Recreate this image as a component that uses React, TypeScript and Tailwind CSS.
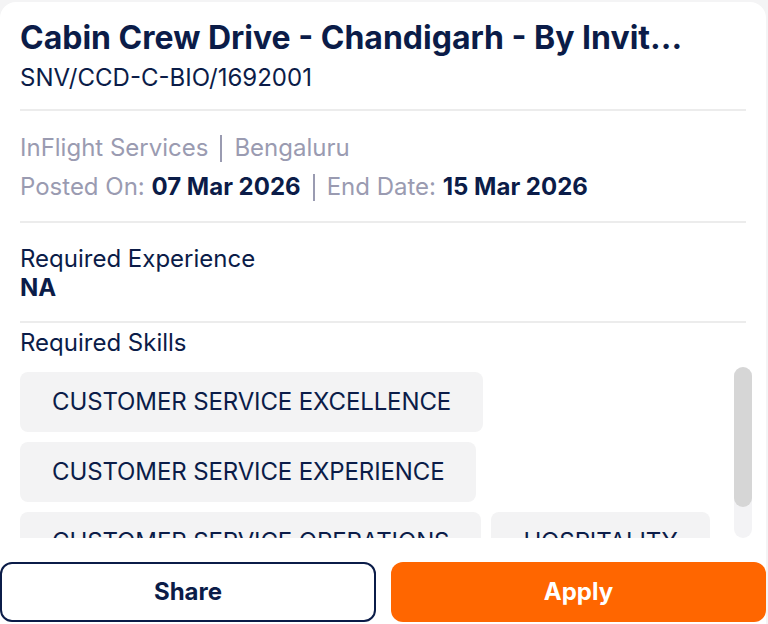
const skills = [
  "CUSTOMER SERVICE EXCELLENCE",
  "CUSTOMER SERVICE EXPERIENCE",
  "CUSTOMER SERVICE OPERATIONS",
  "HOSPITALITY",
  "TEAMWORK",
  "COMMUNICATION",
];

export default function App() {
  return (
    <div className="h-[624px] w-[768px] overflow-hidden bg-[#f4f4f5] pt-[2px] font-['Inter',sans-serif] text-[#0b1c48]">
      <div className="flex h-[630px] w-[766px] flex-col rounded-t-[16px] bg-white">
        {/* Header */}
        <div className="px-[20px] pt-[16px]">
          <h1 className="whitespace-nowrap text-[32px] leading-[40px] font-bold">
            Cabin Crew Drive - Chandigarh - By Invit...
          </h1>
          <p className="mt-[5px] text-[24px] leading-[30px]">SNV/CCD-C-BIO/1692001</p>
        </div>
        <div className="mx-[20px] mt-[16px] h-[2px] bg-[#ececec]" />

        {/* Meta */}
        <div className="px-[20px] pt-[22px] text-[24px] leading-[30px] text-[#9a9bb1]">
          <div className="flex items-center">
            <span>InFlight Services</span>
            <span className="mx-[12px] h-[27px] w-[2px] bg-[#9a9bb1]" />
            <span>Bengaluru</span>
          </div>
          <div className="mt-[9px] flex items-center">
            <span>
              Posted On: <span className="font-bold text-[#0b1c48]">07 Mar 2026</span>
            </span>
            <span className="mx-[12px] h-[27px] w-[2px] bg-[#9a9bb1]" />
            <span>
              End Date: <span className="font-bold text-[#0b1c48]">15 Mar 2026</span>
            </span>
          </div>
        </div>
        <div className="mx-[20px] mt-[19px] h-[2px] bg-[#ececec]" />

        {/* Experience */}
        <div className="px-[20px] pt-[21px] text-[24px] leading-[30px]">
          <p>Required Experience</p>
          <p className="-mt-[1px] font-bold">NA</p>
        </div>
        <div className="mx-[20px] mt-[18px] h-[2px] bg-[#ececec]" />

        {/* Skills */}
        <div className="px-[20px] pt-[5px] text-[24px] leading-[30px]">
          <p>Required Skills</p>
        </div>
        <div className="mt-[9px] flex h-[171px] pl-[20px]">
          <div className="flex flex-1 flex-wrap content-start gap-[10px] overflow-hidden pt-[5px]">
            {skills.map((s) => (
              <span
                key={s}
                className="flex h-[60px] items-center rounded-[8px] bg-[#f3f3f4] px-[32px] text-[24px] tracking-[-0.12px]"
              >
                {s}
              </span>
            ))}
          </div>
          <div className="ml-[18px] mr-[14px] flex w-[18px] flex-col rounded-full bg-[#f3f3f5]">
            <div className="h-[140px] rounded-full bg-[#d6d6d6]" />
          </div>
        </div>

        {/* Actions */}
        <div className="mt-[24px] flex gap-[15px]">
          <button className="h-[60px] w-[376px] rounded-[12px] border-2 border-[#0b1c48] bg-white text-[24px] font-bold text-[#0b1c48]">
            Share
          </button>
          <button className="h-[60px] flex-1 rounded-[12px] bg-[#ff6600] text-[24px] font-bold text-white">
            Apply
          </button>
        </div>
      </div>
    </div>
  );
}
